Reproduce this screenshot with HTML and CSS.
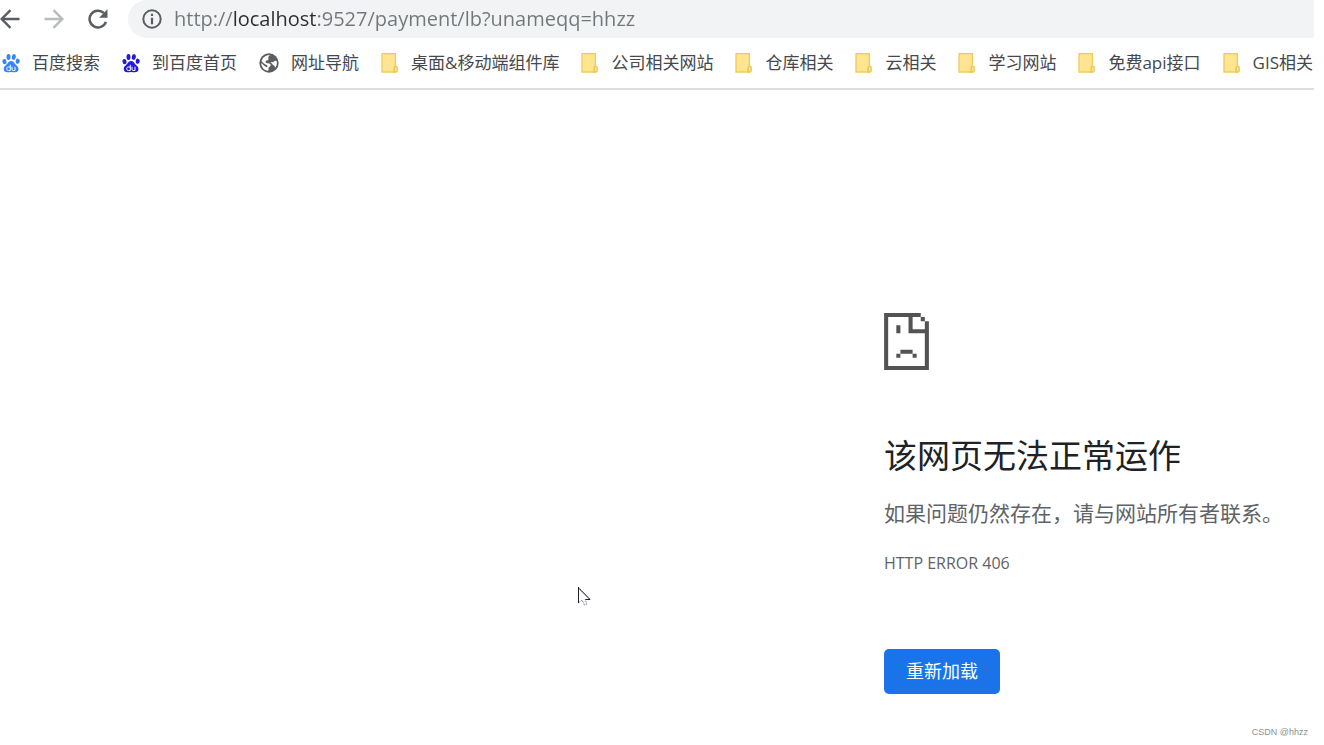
FILE: index.html
```html
<!DOCTYPE html>
<html lang="zh-CN">
<head>
<meta charset="utf-8">
<title>localhost</title>
<link rel="stylesheet" href="styles.css">
</head>
<body>
<svg class="defs" aria-hidden="true">
  <symbol id="folder" viewBox="0 0 18 20">
    <path d="M1 .7h13.4v12.6l-1 1V19H1z" fill="#ffe591" stroke="#f0cb59" stroke-width="1.3"/>
    <path d="M13.2 19v-4.600q0-1.300 1.400-1.300 1.600 0 1.600 1.600v3.100q0 1.200-1.200 1.200z" fill="#ffe591" stroke="#eec550" stroke-width="1.3"/>
  </symbol>
  <symbol id="paw" viewBox="0 0 18 20">
    <g fill="currentColor">
      <ellipse cx="2.5" cy="8.6" rx="2" ry="2.7" transform="rotate(-12 2.5 8.6)"/>
      <ellipse cx="6.5" cy="4" rx="2" ry="2.9"/>
      <ellipse cx="11.8" cy="4" rx="2" ry="2.9" transform="rotate(10 11.8 4)"/>
      <ellipse cx="15.7" cy="8.2" rx="2" ry="2.6" transform="rotate(8 15.7 8.2)"/>
      <path d="M9.1 8c1.8 0 2.8 1.4 3.8 2.8 1.200 1.600 3.600 2.700 3.600 5.300 0 2.100-1.600 3.200-3.500 3.200-1.400 0-2.500-.3-3.900-.3s-2.400.3-3.800.3c-2 0-3.600-1.100-3.600-3.300 0-2.500 2.200-3.500 3.500-5.200C6.200 9.400 7.300 8 9.100 8z"/>
    </g>
    <g fill="none" stroke="#fff" stroke-width="1">
      <path d="M8.300 11.800v5.700H6.500c-2.400 0-2.400-3.500 0-3.500h1.800M10 13.800v2.500q0 1.200 1.200 1.200H13v-3.700"/>
    </g>
  </symbol>
</svg>

<header class="browser">
  <div class="toolbar">
    <button class="tool" type="button" aria-label="后退">
      <svg viewBox="0 0 20 20" width="20" height="20"><path d="M19.500 10H2M10.500 1.200 1.700 10l8.800 8.800" fill="none" stroke="#5a5e62" stroke-width="2.400"/></svg>
    </button>
    <button class="tool" type="button" aria-label="前进" disabled>
      <svg viewBox="0 0 20 20" width="20" height="20"><path d="M.5 10H18M9.500 1.200l8.800 8.800-8.800 8.800" fill="none" stroke="#b9bbbe" stroke-width="2.400"/></svg>
    </button>
    <button class="tool" type="button" aria-label="重新加载此页">
      <svg viewBox="0 0 20 20" width="20" height="20"><path d="M17.900 12.800A8.400 8.400 0 1 1 16 4.200" fill="none" stroke="#5a5e62" stroke-width="2.500"/><path d="M19.500.3v8.400h-8.400z" fill="#5a5e62"/></svg>
    </button>
    <div class="address">
      <svg viewBox="0 0 20 20" width="20" height="20" aria-hidden="true"><circle cx="10" cy="10" r="8.700" fill="none" stroke="#5a5e62" stroke-width="2"/><path d="M10 4.700v2.400M10 8.700v6.600" stroke="#5a5e62" stroke-width="2.200"/></svg>
      <input class="url" type="text" aria-label="地址" value="http://localhost:9527/payment/lb?unameqq=hhzz" spellcheck="false">
    </div>
  </div>
  <nav class="bookmarks" aria-label="书签">
    <a href="#"><svg class="mark light-paw"><use href="#paw"/></svg>百度搜索</a>
    <a href="#"><svg class="mark dark-paw"><use href="#paw"/></svg>到百度首页</a>
    <a href="#"><svg class="mark globe" viewBox="0 0 20 20"><circle cx="10" cy="10" r="9.700" fill="#5a5e62"/><path d="M11.500 2.300C10 3 8.800 4 9.300 5.400c.4 1 .2 1.700-.9 1.900-1.500.2-2 .9-1.700 2 .3.900 1.300 1 2.500 1 1.700.1 2.700.9 2.400 2.200-.3 1.200-1.700 1.300-2 2.600-.2 1 .1 1.700-.4 2.700C5 17.300 2.200 14 2.200 10l4 3.600c1.100.8 2.300.3 2.200-.7-.1-.9-1-1.100-2-1.500C4.800 10.700 3.600 9.200 2.500 8.200 3.400 4.700 6.400 2.200 10 2.200zM17.700 8.300c.5 2.300 0 4.600-1.500 6.500-.3-1.500-1-2.400-2.300-2.700-.4-1.600-1.200-2.200-2.600-2.700 1.400-.4 2.700-.1 3.700-1 .8-.7 1.700-.8 2.700-.1z" fill="#fff"/></svg>网址导航</a>
    <a href="#"><svg class="mark"><use href="#folder"/></svg>桌面&amp;移动端组件库</a>
    <a href="#"><svg class="mark"><use href="#folder"/></svg>公司相关网站</a>
    <a href="#"><svg class="mark"><use href="#folder"/></svg>仓库相关</a>
    <a href="#"><svg class="mark"><use href="#folder"/></svg>云相关</a>
    <a href="#"><svg class="mark"><use href="#folder"/></svg>学习网站</a>
    <a href="#"><svg class="mark"><use href="#folder"/></svg>免费api接口</a>
    <a href="#"><svg class="mark"><use href="#folder"/></svg>GIS相关</a>
  </nav>
</header>

<main class="error">
  <svg class="sad" viewBox="0 0 11 14" aria-hidden="true"><path d="M0 0h9v1h1v1h1v12H0zM1 1v12h9V5H6V1zM7 1v3h3V2H9V1zM3 3h1v2H3zM4 9h3v1H4zM3 10h1v1H3zM7 10h1v1H7z" fill="#535353" fill-rule="evenodd"/></svg>
  <h1>该网页无法正常运作</h1>
  <p class="advice">如果问题仍然存在，请与网站所有者联系。</p>
  <p class="code">HTTP ERROR 406</p>
  <button class="reload" type="button">重新加载</button>
</main>

<footer class="credit">CSDN @hhzz</footer>

<svg class="pointer" viewBox="0 0 13 19" aria-hidden="true"><path d="M.5.500v15.500l3.500-3 2.500 5 2.500-1-2-4.500h5z" fill="#fff" stroke="#85858c" stroke-width="1" stroke-dasharray="2 1"/><path d="M.5 0v16M0 .5l12 12H7.500" fill="none" stroke="#20202c"/></svg>
</body>
</html>
```

FILE: styles.css
```css
* {
  box-sizing: border-box;
}

body {
  margin: 0;
  min-height: 100vh;
  display: flex;
  flex-direction: column;
  position: relative;
  overflow: hidden;
  background: #fff;
  color: #5f6368;
  font-family: "Open Sans", "Noto Sans CJK SC", sans-serif;
}

button {
  font: inherit;
  border: 0;
  cursor: pointer;
}

.defs {
  position: absolute;
  width: 0;
  height: 0;
}

.browser {
  margin-right: 10px;
  border-bottom: 2px solid #dcdddf;
}

.toolbar {
  display: flex;
  align-items: center;
  gap: 24px;
  height: 38px;
}

.tool {
  display: flex;
  padding: 0;
  background: none;
}

.address {
  flex: 1;
  display: flex;
  align-items: center;
  gap: 12px;
  height: 38px;
  margin-left: -4px;
  padding-left: 14px;
  border-radius: 20px 0 0 20px;
  background: #f1f3f4;
}

.url {
  flex: 1;
  padding: 0;
  border: 0;
  outline: 0;
  font-family: "Open Sans", sans-serif;
  font-size: 20px;
  line-height: 28px;
  color: transparent;
  background: linear-gradient(to right, #73777b 58px, #2b2d30 58px, #2b2d30 143px, #73777b 143px);
  -webkit-background-clip: text;
  background-clip: text;
}

.bookmarks {
  display: flex;
  align-items: center;
  gap: 22px;
  height: 50px;
  padding-left: 2px;
  overflow: hidden;
}

.bookmarks a {
  flex: none;
  display: flex;
  align-items: center;
  gap: 12px;
  color: #45484c;
  font-size: 17px;
  line-height: 24px;
  text-decoration: none;
  white-space: nowrap;
}

.mark {
  width: 18px;
  height: 20px;
}

.globe {
  width: 20px;
}

.light-paw {
  color: #3385ff;
}

.dark-paw {
  color: #2319dc;
}

.error {
  width: 430px;
  margin: 223px 10px 0 auto;
  display: flex;
  flex-direction: column;
  align-items: flex-start;
}

.sad {
  width: 45px;
  height: 57px;
}

h1 {
  margin: 64px 0 0;
  color: #202124;
  font-size: 33px;
  font-weight: 400;
  line-height: 44px;
}

.advice {
  margin: 21px 0 0;
  font-size: 21px;
  line-height: 28px;
  white-space: nowrap;
}

.code {
  margin: 24px 0 0;
  font-size: 16px;
  line-height: 24px;
}

.reload {
  margin-top: 74px;
  padding: 0 22px;
  border-radius: 5px;
  background: #1a73e8;
  color: #fff;
  font-size: 18px;
  line-height: 45px;
}

.credit {
  margin-top: auto;
  padding: 0 16px 6px;
  color: #8f8f8f;
  font-family: "Liberation Sans", sans-serif;
  font-size: 9px;
  line-height: 14px;
  text-align: right;
}

.pointer {
  position: absolute;
  left: 578px;
  top: 587px;
  width: 13px;
  height: 19px;
}
```
